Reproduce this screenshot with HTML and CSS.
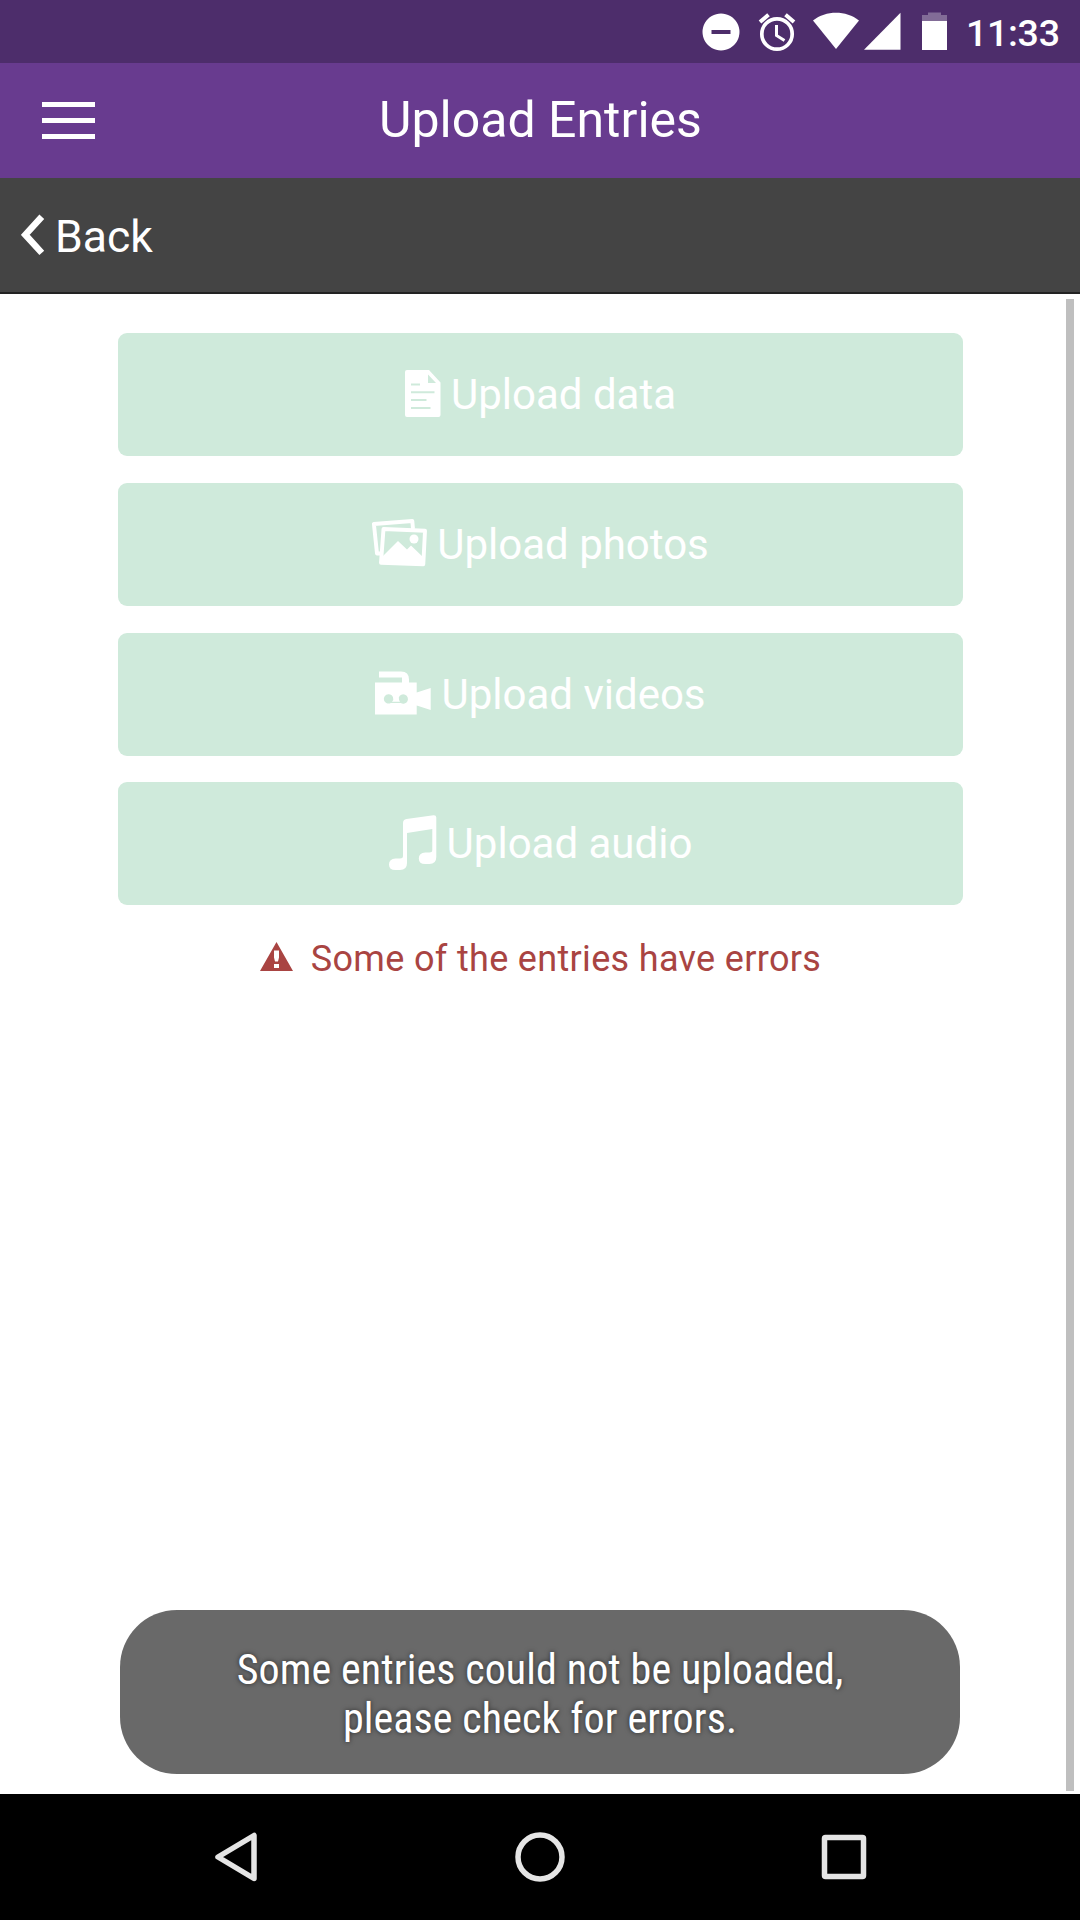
FILE: index.html
```html
<!DOCTYPE html>
<html lang="en">
<head>
<meta charset="utf-8">
<title>Upload Entries</title>
<link rel="stylesheet" href="styles.css">
</head>
<body>
<div class="screen">
  <div class="status-bar">
    <svg class="status-icons" width="240" height="63" viewBox="710 0 240 63" fill="#fff">
      <path fill-rule="evenodd" d="M721 13.500a18.500 18.500 0 1 0 .01 0zM711.500 30h19v4h-19z"/>
      <circle cx="777" cy="34" r="15.200" fill="none" stroke="#fff" stroke-width="3.700"/>
      <path d="M776.500 25v10.500l8 5" fill="none" stroke="#fff" stroke-width="3"/>
      <path d="M760 22l8.500-7.200M794 22l-8.500-7.200" fill="none" stroke="#fff" stroke-width="4"/>
      <path d="M836 49L813 20.500C826 10.200 846 10.200 859 20.500z"/>
      <path d="M864 49.700L900.500 12.700v37z"/>
      <path opacity=".3" d="M922 15h6v-2.500h13V15h6v6h-25z"/>
      <path d="M922 21h25v29h-25z"/>
    </svg>
    <span class="clock">11:33</span>
  </div>
  <header class="app-bar">
    <div class="menu"><i></i><i></i><i></i></div>
    <h1 class="title">Upload Entries</h1>
  </header>
  <nav class="back-bar">
    <svg width="24" height="42" viewBox="0 0 24 42" fill="none" stroke="#fff" stroke-width="6.500"><path d="M20.800 2.700L4.300 20.800l16.500 18.100"/></svg>
    <span class="back-label">Back</span>
  </nav>
  <main class="content">
    <div class="button">
      <svg width="36" height="60" viewBox="0 0 36 60" fill="#fff"><path fill-rule="evenodd" d="M2 5h22l11.500 12.500V50q0 2-2 2H2q-2 0-2-2V7q0-2 2-2zM23 9.500V18h8zM6 18.400v2h9v-2zM6 26.200v2h23.500v-2zM6 34v2h15.500v-2zM6 42v2h19.500v-2z"/></svg>
      <span class="label">Upload data</span>
    </div>
    <div class="button">
      <svg width="55" height="60" viewBox="0 0 55 60" fill="none" stroke="#fff" stroke-width="3.900" stroke-linejoin="round"><path d="M41 15l-.7-8L1.900 10l3.100 29.500h4"/><path d="M11.500 15L53 16.800 51.300 50.200 9 48.700z"/><path stroke="none" fill="#fff" d="M10 43L26 27l9 8.500 4-4L52 44v6H9z"/><circle cx="42" cy="25" r="4.500" stroke="none" fill="#fff"/></svg>
      <span class="label">Upload photos</span>
    </div>
    <div class="button">
      <svg width="56" height="60" viewBox="0 0 56 60" fill="#fff"><path fill-rule="evenodd" d="M4 7.500h22q8 0 8 8V18.500h7.700v10L55.700 24v22l-14-4.500v9H0v-32h27v-5H4zM13.300 30.200a4.700 4.700 0 1 0 2.500 8.800h10a4.700 4.700 0 1 0-2-5.500q0 3 1.200 4.200h-8q2-2 1-4.500a4.700 4.700 0 0 0-4.700-3z"/></svg>
      <span class="label">Upload videos</span>
    </div>
    <div class="button">
      <svg width="48" height="60" viewBox="0 0 48 60" fill="#fff"><path d="M17.500 5L44.500 1.200Q47.300 1 47.300 3.500V43q0 7-7 7h-4q-6.500 0-6.500-5.500t6.500-6h4Q43.300 38.500 43.300 36V15L18 19v30q0 7-7 7H6.500Q0 56 0 50.500t6.500-6H11q3 0 3-2.500V9q0-3.500 3.500-4z"/></svg>
      <span class="label">Upload audio</span>
    </div>
    <p class="error">
      <svg width="33" height="29" viewBox="0 0 33 29"><path fill="#a94442" fill-rule="evenodd" d="M16.500 0L33 29H0zM14 8.500v7l1 4h3l1-4v-7zM14 22v4h5v-4z"/></svg>
      <span class="error-text">Some of the entries have errors</span>
    </p>
    <div class="scrollbar"></div>
    <div class="toast">Some entries could not be uploaded,<br>please check for errors.</div>
  </main>
  <footer class="nav-bar">
    <svg width="52" height="56" viewBox="0 0 52 56"><path d="M44 6.500v43L8 28z"/></svg>
    <svg width="56" height="56" viewBox="0 0 56 56"><circle cx="28" cy="28" r="22"/></svg>
    <svg width="52" height="56" viewBox="0 0 52 56"><rect x="6.500" y="8.500" width="39" height="39" rx="1"/></svg>
  </footer>
</div>
</body>
</html>
```
FILE: styles.css
```css
* { box-sizing: border-box; }
body { margin: 0; background: #fff; font-family: Roboto, "Liberation Sans", sans-serif; }
svg { display: block; flex: none; }
.screen { width: 1080px; height: 1920px; display: grid; grid-template-rows: 63px 115px 116px 1500px 126px; overflow: hidden; }
.status-bar { background: #4d2d6b; color: #fff; display: flex; justify-content: flex-end; align-items: center; padding-right: 22px; }
.status-icons { overflow: visible; margin-right: 16px; }
.clock { font-size: 37.500px; font-weight: 500; letter-spacing: -.3px; line-height: 44px; padding-top: 2px; width: 92px; white-space: nowrap; }
.app-bar { background: #683b8f; color: #fff; display: grid; grid-template-columns: 200px 1fr 200px; align-items: center; }
.menu { display: grid; gap: 10.300px; padding: 0 0 0 42px; }
.menu i { width: 53px; height: 5.600px; background: #fff; }
.title { margin: 0; font-size: 50px; font-weight: 400; text-align: center; line-height: 60px; padding: 0 0 2px 1px; white-space: nowrap; }
.back-bar { background: #444; border-bottom: 2px solid #222; color: #fff; display: flex; align-items: center; gap: 10px; padding-left: 21px; }
.back-label { font-size: 44.500px; line-height: 52px; padding-top: 4px; }
.content { position: relative; display: flex; flex-direction: column; align-items: center; gap: 26.600px; padding-top: 39.400px; background: #fff; }
.button { width: 845px; height: 123px; border-radius: 9px; background: #cfeadb; color: #fff; display: flex; justify-content: center; align-items: center; gap: 10px; flex: none; padding-left: 1px; }
.label { font-size: 42px; line-height: 50px; padding-top: 1px; white-space: nowrap; }
.error { margin: 6px 0 0; color: #a94442; display: flex; align-items: center; gap: 18px; padding-left: 1px; }
.error svg { margin-top: -4px; }
.error-text { font-size: 36px; letter-spacing: .33px; line-height: 42px; white-space: nowrap; }
.scrollbar { position: absolute; top: 5px; right: 6px; width: 8px; height: 1492px; background: #bfbfbf; }
.toast { position: absolute; left: 120px; top: 1316px; width: 840px; height: 164px; border-radius: 57px; background: #696969; color: #fff; text-align: center; font-family: "Roboto Condensed", Roboto, sans-serif; font-stretch: 75%; font-size: 42px; letter-spacing: .1px; line-height: 49px; padding-top: 35px; text-shadow: 0 0 5px rgba(0, 0, 0, .6); white-space: nowrap; }
.nav-bar { background: #000; display: flex; justify-content: center; align-items: center; gap: 250px; }
.nav-bar svg { fill: none; stroke: #e5e5e5; stroke-width: 5.500px; stroke-linejoin: round; }
```
